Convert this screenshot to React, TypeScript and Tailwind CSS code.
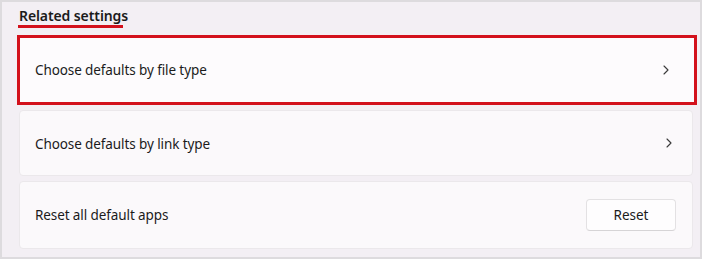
import React from "react";

const Chevron = () => (
  <svg width="16" height="16" viewBox="0 0 16 16" fill="none" className="shrink-0">
    <path d="M6 4 L10 8 L6 12" stroke="#3a3a3a" strokeWidth="1.1" strokeLinecap="round" strokeLinejoin="round" />
  </svg>
);

export default function App() {
  return (
    <div
      className="w-[702px] h-[259px] bg-[#f3eff4] border-2 border-[#dddbde] pl-[17px] text-[#1b1b1b] overflow-hidden"
      style={{ fontFamily: '"Noto Sans", "Open Sans", Arial, sans-serif' }}
    >
      <div className="mt-[4px] inline-flex flex-col">
        <span className="text-[14px] leading-[20px] font-semibold tracking-[-0.1px]">Related settings</span>
        <div className="-mt-[1px] h-[3px] bg-[#d3111c] -ml-[1px] w-[105px]" />
      </div>
      <div className="mt-[7px] -ml-[2px] w-[680px] h-[70px] border-[3px] border-[#d3111c] bg-[#fdfbfd] flex items-center pl-[15px] pr-[20px] justify-between">
        <span className="text-[13.5px] tracking-[-0.1px]">Choose defaults by file type</span>
        <Chevron />
      </div>
      <div className="mt-[5px] w-[674px] h-[66px] rounded-[4px] border border-[#ebe8eb] bg-[#fbf9fb] flex items-center pl-[15px] pr-[15px] justify-between">
        <span className="text-[13.5px] tracking-[-0.1px] mt-[2px]">Choose defaults by link type</span>
        <Chevron />
      </div>
      <div className="mt-[5px] w-[674px] h-[68px] rounded-[4px] border border-[#ebe8eb] bg-[#fbf9fb] flex items-center pl-[15px] pr-[16px] justify-between">
        <span className="text-[13.5px] tracking-[-0.1px]">Reset all default apps</span>
        <button className="w-[90px] h-[32px] rounded-[4px] border border-[#e3e1e3] border-b-[#d6d4d6] bg-[#fefdfe] text-[13.5px] text-[#1b1b1b]">
          Reset
        </button>
      </div>
    </div>
  );
}
